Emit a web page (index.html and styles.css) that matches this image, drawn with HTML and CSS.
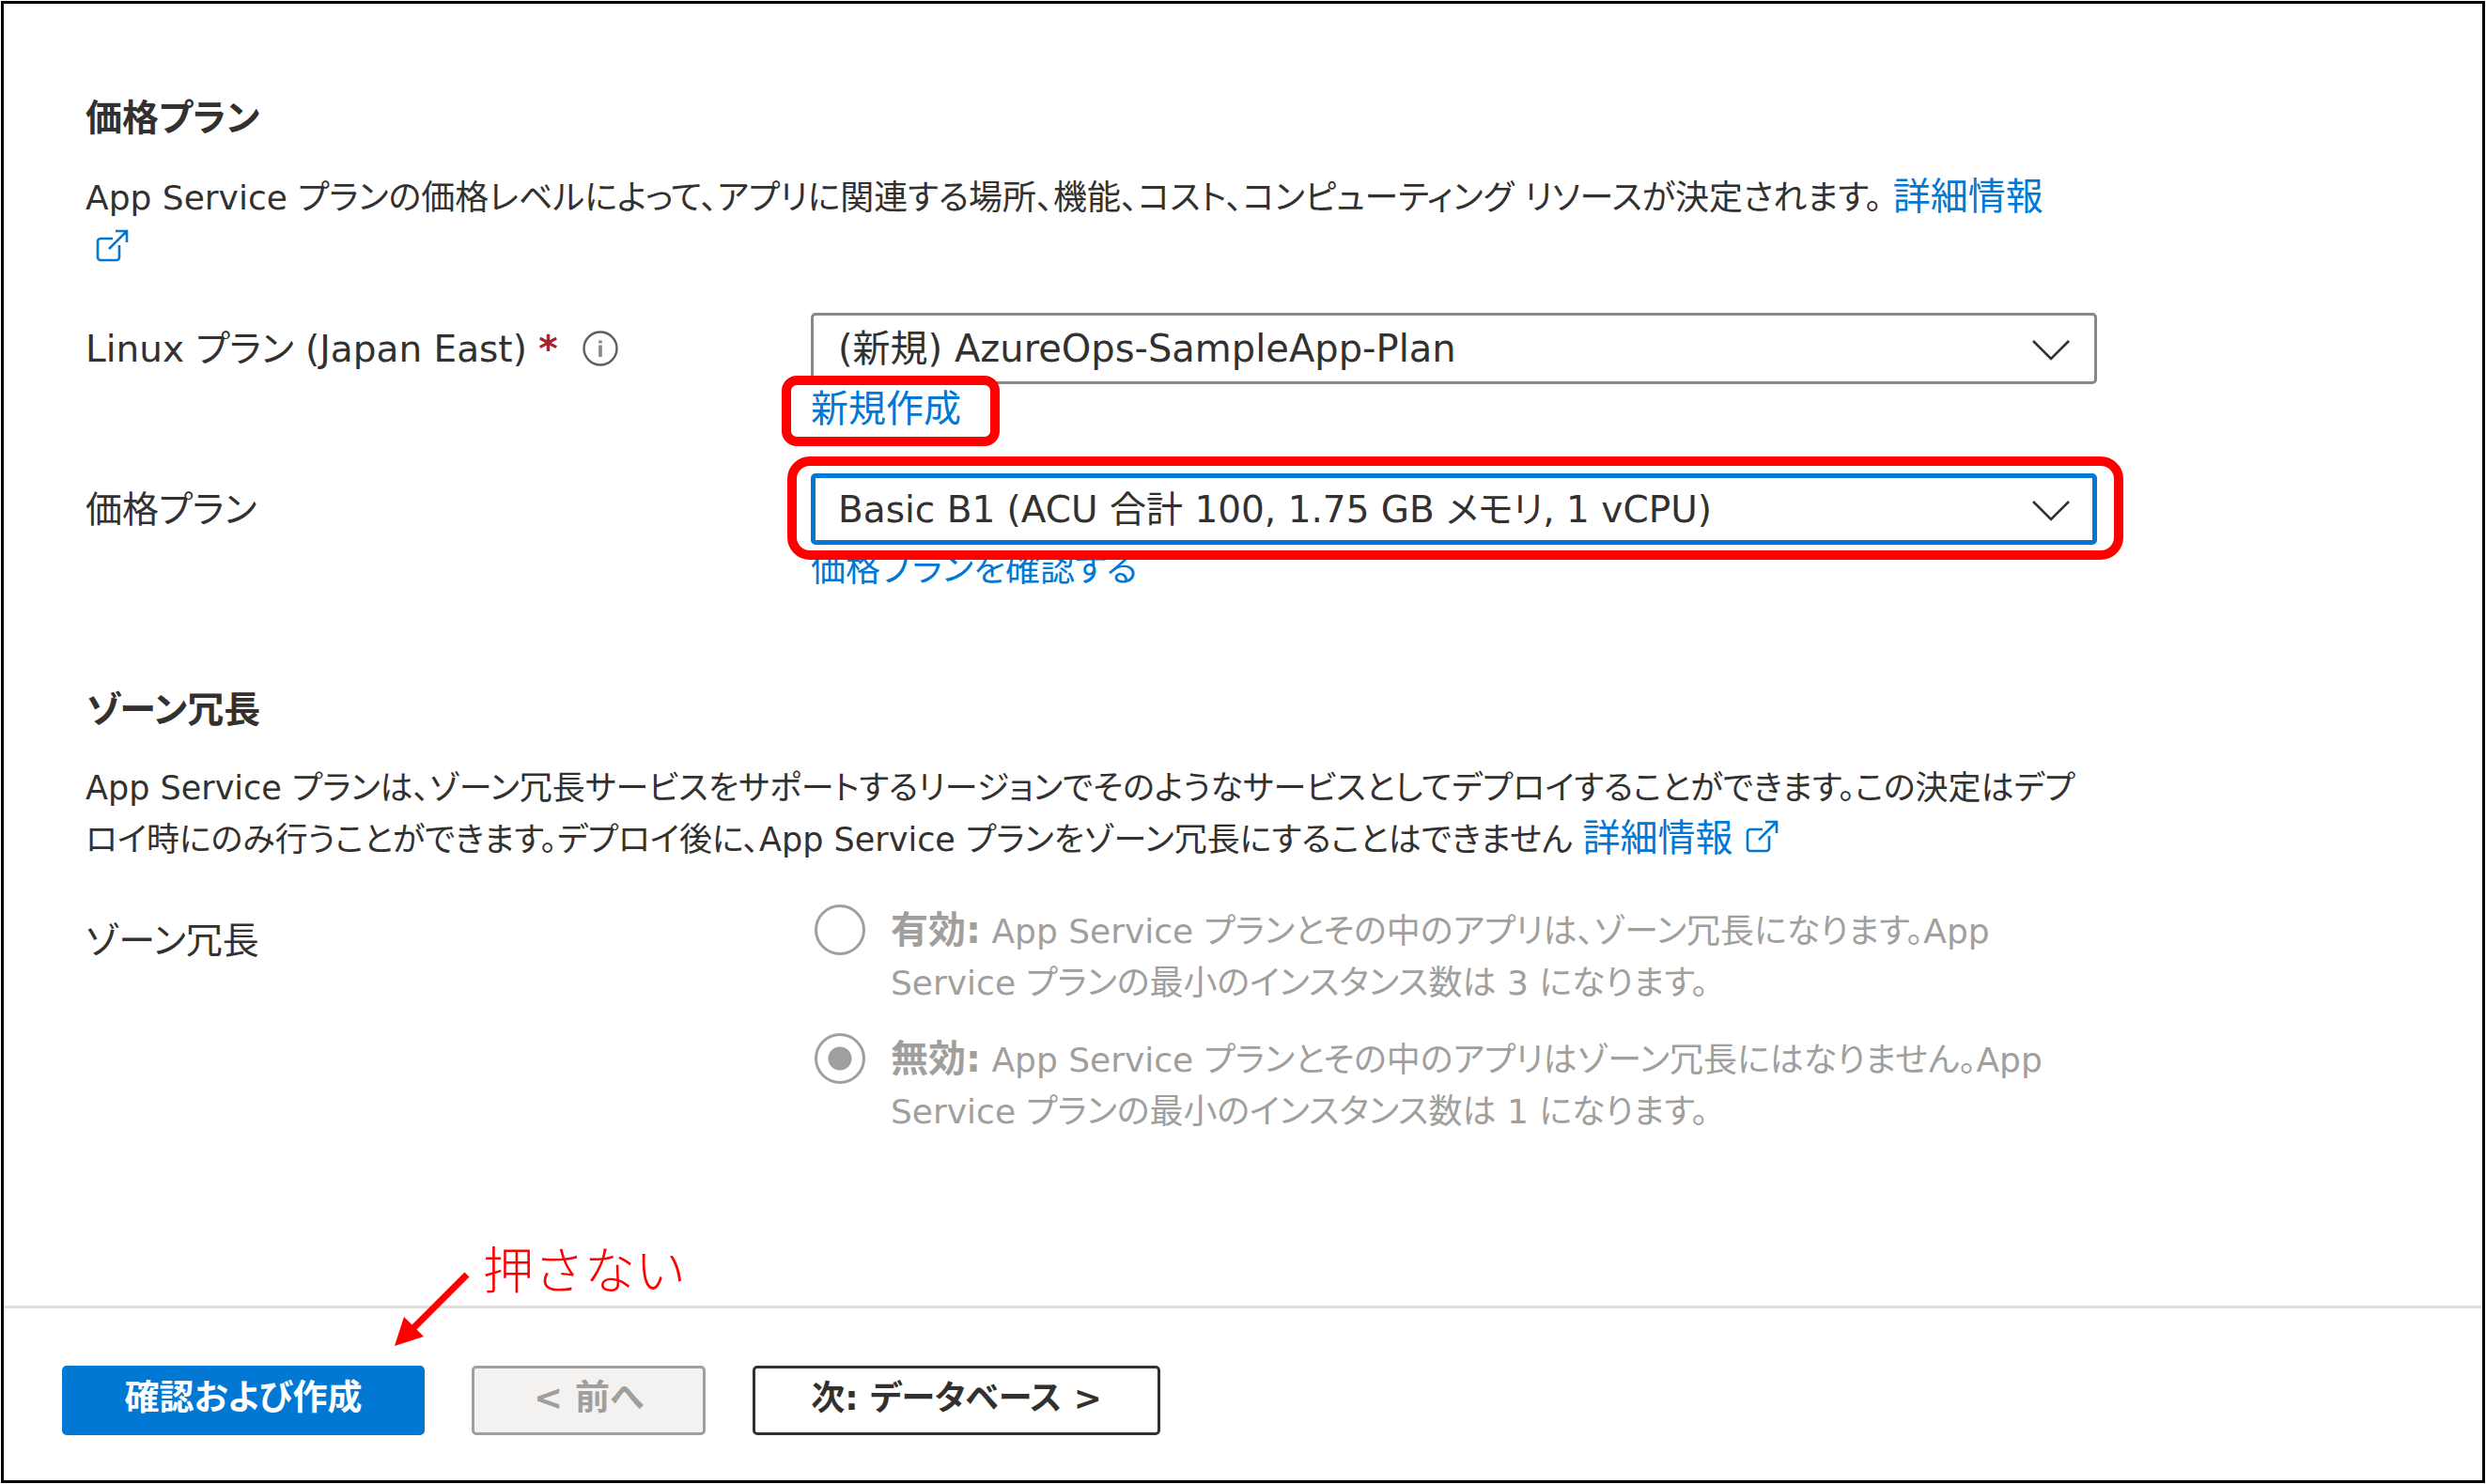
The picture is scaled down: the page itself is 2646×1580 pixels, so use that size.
FILE: index.html
```html
<!DOCTYPE html>
<html lang="ja">
<head>
<meta charset="utf-8">
<meta name="viewport" content="width=device-width, initial-scale=1">
<title>Web アプリの作成</title>
<link rel="stylesheet" href="styles.css">
</head>
<body>
<svg class="sprite" aria-hidden="true">
  <symbol id="external" viewBox="0 0 36 36">
    <path d="M19 10H6a3 3 0 0 0-3 3v17a3 3 0 0 0 3 3h17a3 3 0 0 0 3-3V17M15 21 34 2M22 2h12v12" fill="none" stroke="currentColor" stroke-width="2.6"/>
  </symbol>
  <symbol id="chevron" viewBox="0 0 42 24">
    <path d="M2 2 21 21 40 2" fill="none" stroke="currentColor" stroke-width="2.6"/>
  </symbol>
</svg>
<div class="frame">
  <main class="content">
    <section class="section">
      <h2 class="heading">価格プラン</h2>
      <p class="text">App Service プランの価格レベルによって、アプリに関連する場所、機能、コスト、コンピューティング リソースが決定されます。 <a class="link" href="#pricing">詳細情報<br><svg class="external external-wrapped"><use href="#external"/></svg></a></p>
      <div class="row">
        <div class="label">
          <label for="plan">Linux プラン (Japan East) <span class="required">*</span></label>
          <svg class="info" viewBox="0 0 38 38"><circle cx="19" cy="19" r="17.5" fill="none" stroke="currentColor" stroke-width="2.4"/><path d="M19 15.500v12.500M19 10.500v3" stroke="#8a8886" stroke-width="3.600"/></svg>
        </div>
        <div class="field">
          <div class="picker">
            <select class="select" id="plan"><option>(新規) AzureOps-SampleApp-Plan</option></select>
            <svg class="chevron"><use href="#chevron"/></svg>
          </div>
          <a class="link mark mark-link" href="#new">新規作成</a>
        </div>
      </div>
      <div class="row">
        <label class="label" for="price">価格プラン</label>
        <div class="field">
          <div class="picker mark mark-select">
            <select class="select select-active" id="price"><option>Basic B1 (ACU 合計 100, 1.75 GB メモリ, 1 vCPU)</option></select>
            <svg class="chevron"><use href="#chevron"/></svg>
          </div>
          <a class="link link-small" href="#plans">価格プランを確認する</a>
        </div>
      </div>
    </section>
    <section class="section">
      <h2 class="heading">ゾーン冗長</h2>
      <p class="text text-dense">App Service プランは、ゾーン冗長サービスをサポートするリージョンでそのようなサービスとしてデプロイすることができます。この決定はデプ<br>ロイ時にのみ行うことができます。デプロイ後に、App Service プランをゾーン冗長にすることはできません <a class="link" href="#zone">詳細情報 <svg class="external"><use href="#external"/></svg></a></p>
      <div class="row">
        <div class="label" id="zone-label">ゾーン冗長</div>
        <div class="field options" role="radiogroup" aria-labelledby="zone-label">
          <div class="option">
            <input class="radio" type="radio" name="zone" id="zone-on" disabled>
            <label for="zone-on"><b>有効:</b> App Service プランとその中のアプリは、ゾーン冗長になります。App<br>Service プランの最小のインスタンス数は 3 になります。</label>
          </div>
          <div class="option">
            <input class="radio" type="radio" name="zone" id="zone-off" checked disabled>
            <label for="zone-off"><b>無効:</b> App Service プランとその中のアプリはゾーン冗長にはなりません。App<br>Service プランの最小のインスタンス数は 1 になります。</label>
          </div>
        </div>
      </div>
    </section>
  </main>
  <footer class="footer">
    <button class="button button-primary" type="button">確認および作成</button>
    <button class="button button-back" type="button" disabled>&lt; 前へ</button>
    <button class="button button-next" type="button">次: データベース &gt;</button>
    <div class="note">
      <svg class="arrow" viewBox="0 0 80 80"><path d="M77 3 20 60" stroke="currentColor" stroke-width="7"/><path d="M0 79 10 48 31 69Z" fill="currentColor"/></svg>
      <span class="note-text">押さない</span>
    </div>
  </footer>
</div>
</body>
</html>
```
FILE: styles.css
```css
* { box-sizing: border-box; }

body {
  margin: 0;
  padding: 1px;
  background: #fff;
  color: #323130;
  font-family: "DejaVu Sans", "Noto Sans CJK JP", sans-serif;
  font-size: 40px;
  line-height: 53px;
  font-feature-settings: "palt";
}

.sprite { position: absolute; width: 0; height: 0; }

.frame {
  display: flex;
  flex-direction: column;
  min-height: calc(100vh - 2px);
  border: 3px solid #000;
}

.content {
  flex: 1;
  display: flex;
  flex-direction: column;
  gap: 96px;
  padding: 95px 87px 0;
}

.section { max-width: 2144px; }

.heading {
  margin: 0 0 31px;
  font-size: 39px;
  line-height: 53px;
  font-weight: 700;
}

.text { margin: 0; font-size: 36px; white-space: nowrap; }
.text-dense { font-size: 35px; }

.link { color: #0078d4; font-size: 40px; line-height: 53px; text-decoration: none; }
.link-small { font-size: 37px; }

.external {
  width: 36px;
  height: 36px;
  vertical-align: -3px;
}

.external-wrapped { margin-left: 10px; }

.row {
  display: grid;
  grid-template-columns: 772px minmax(0, 1fr);
  align-items: start;
  margin-top: 42px;
}

.label {
  display: flex;
  align-items: center;
  gap: 26px;
  min-height: 76px;
  font-size: 39px;
}

.required { color: #a4262c; font-weight: 700; }

.info { width: 38px; height: 38px; color: #605e5c; }

.field { display: flex; flex-direction: column; align-items: start; }

.picker { position: relative; width: 100%; max-width: 1369px; }

.select {
  display: block;
  width: 100%;
  height: 76px;
  margin: 0;
  padding: 0 96px 0 26px;
  appearance: none;
  border: 3px solid #8a8886;
  border-radius: 5px;
  background: #fff;
  color: inherit;
  font: inherit;
  font-feature-settings: inherit;
}

.select-active { padding-left: 24px; border: 5px solid #0078d4; font-size: 39px; }

.chevron {
  position: absolute;
  right: 28px;
  top: 28px;
  width: 42px;
  height: 24px;
  pointer-events: none;
}

.mark { position: relative; }

.mark::after {
  content: "";
  position: absolute;
  border: 10px solid #f00;
  pointer-events: none;
}

.mark-link::after { inset: -9px -41px -13px -31px; border-radius: 16px; }
.mark-select::after { inset: -18px -28px -16px -25px; border-radius: 24px; z-index: 1; }

.options { gap: 26px; color: #a19f9d; }

.option {
  display: flex;
  align-items: start;
  gap: 27px;
  font-size: 36px;
  line-height: 55px;
  white-space: nowrap;
}

.option b { font-size: 40px; }

.radio {
  flex: none;
  width: 54px;
  height: 54px;
  margin: 0 0 0 4px;
  appearance: none;
  border: 3px solid #a19f9d;
  border-radius: 50%;
  background: #fff;
}

.radio:checked { background: radial-gradient(circle, #a19f9d 12px, #fff 13px); }

.footer {
  position: relative;
  display: flex;
  gap: 50px;
  padding: 61px 62px 48px;
  border-top: 3px solid #e1dfdd;
}

.button {
  height: 74px;
  padding: 0 0 6px;
  border: 3px solid #323130;
  border-radius: 5px;
  background: #fff;
  color: #323130;
  font: inherit;
  font-size: 37px;
  font-weight: 700;
  font-feature-settings: inherit;
}

.button-primary { width: 386px; border-color: #0078d4; background: #0078d4; color: #fff; }
.button-back { width: 249px; border-color: #a19f9d; background: #f3f2f1; color: #a19f9d; }
.button-next { width: 434px; font-size: 36px; }

.note {
  position: absolute;
  left: 416px;
  top: -70px;
  display: flex;
  align-items: start;
  gap: 14px;
  color: #f00;
}

.arrow { width: 80px; height: 80px; margin-top: 31px; }

.note-text {
  font-family: "Noto Sans CJK JP", sans-serif;
  font-size: 54px;
  font-weight: 300;
  font-feature-settings: normal;
}
```
